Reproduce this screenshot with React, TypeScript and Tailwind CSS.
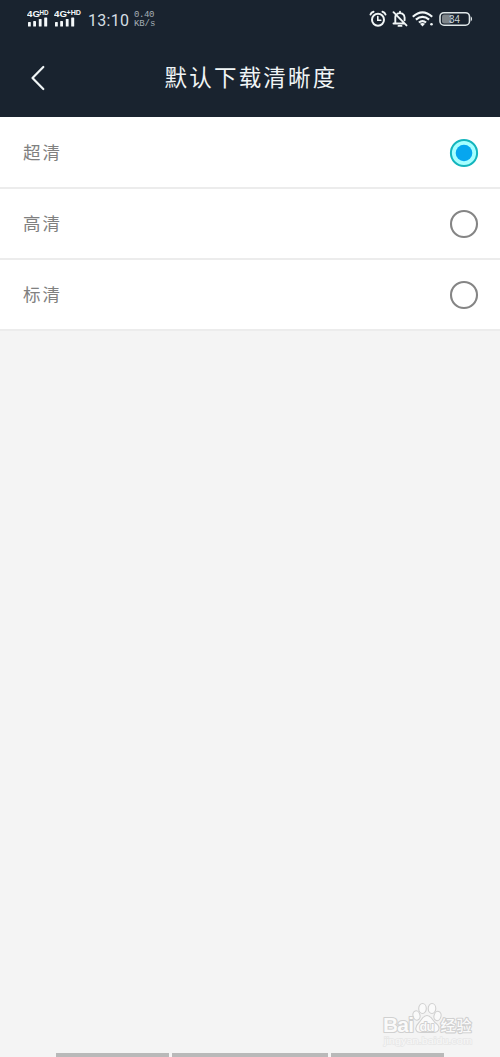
import { useState } from "react";

function SignalIcon({ label, wide }: { label: string; wide?: boolean }) {
  return (
    <svg width={wide ? 28 : 23} height="20" viewBox={wide ? "0 0 28 20" : "0 0 23 20"} fill="#f4f8fa">
      <text x="0" y="8" fontSize="9.5" fontWeight="700" fontFamily="Liberation Sans, sans-serif" textLength="13" lengthAdjust="spacingAndGlyphs">4G</text>
      <text x="12.5" y="6" fontSize="6.5" fontWeight="700" fontFamily="Liberation Sans, sans-serif" textLength={wide ? 14.5 : 9} lengthAdjust="spacingAndGlyphs">{label}</text>
      <rect x="1" y="13" width="2.8" height="4.5" rx=".6" />
      <rect x="6.2" y="12" width="2.8" height="5.5" rx=".6" />
      <rect x="11.8" y="10" width="2.8" height="7.5" rx=".6" />
      <rect x="17.2" y="8.5" width="3" height="9" rx=".6" />
    </svg>
  );
}

function AlarmIcon() {
  return (
    <svg width="18" height="18" viewBox="0 0 18 18" fill="none" stroke="#f1f6f7" strokeWidth="2" strokeLinecap="round">
      <circle cx="9" cy="9.8" r="6" />
      <path d="M1.5 4.5Q2.2 2.2 4.5 1.7M16.5 4.5Q15.8 2.2 13.5 1.7" />
      <path d="M8.8 6.5v3.8h3" strokeWidth="1.6" />
    </svg>
  );
}

function MutedBellIcon() {
  return (
    <svg width="16" height="18" viewBox="0 0 16 18" fill="none" stroke="#f1f6f7" strokeWidth="1.9" strokeLinecap="round" strokeLinejoin="round">
      <path d="M1.5 13.5h11M3.3 13V7.5q0-1.3.5-2.3M5.5 3.7Q8 2.5 10.3 3.7 12.6 4.9 12.6 7.5v2.8M8 1.7v1M6.5 15.9h3M1.5 2.2l13 13.2" />
    </svg>
  );
}

function WifiIcon() {
  return (
    <svg width="22" height="18" viewBox="0 0 22 18" fill="none" stroke="#f1f6f7" strokeWidth="2.2">
      <path d="M.8 6.700Q10.5-2 20.2 6.7M3.9 9.7q6.6-5.6 13.2 0M6.9 12.5q3.6-2.9 7.2 0" />
      <path d="m7.9 13.8 2.6 2.7 2.6-2.7q-2.6-1.8-5.2 0Z" fill="#f1f6f7" stroke="none" />
      <circle cx="19.5" cy="14.2" r="1.3" fill="#f1f6f7" stroke="none" />
    </svg>
  );
}

function BatteryIcon() {
  return (
    <svg width="34" height="16" viewBox="0 0 34 16" fill="none">
      <rect x="3" y="3.5" width="9.5" height="9" rx="2" fill="#7d8489" />
      <rect x="1" y="1.7" width="29.5" height="12.5" rx="4" stroke="#dfe7e9" strokeWidth="1.6" />
      <path d="M31.800 5.2q2.6 2.7 0 5.4Z" fill="#e9eff1" />
      <text x="10" y="11.8" fontSize="10.5" fontFamily="Liberation Sans, sans-serif" fill="#cdd5d8" textLength="11" lengthAdjust="spacingAndGlyphs">34</text>
    </svg>
  );
}

function StatusBar() {
  return (
    <div className="flex h-[40px] items-start pl-[27px] pr-[27px] pt-[9px]">
      <SignalIcon label="HD" />
      <div className="ml-[4px]"><SignalIcon label="+HD" wide /></div>
      <span className="ml-[6px] w-[42px] whitespace-nowrap font-['Roboto',sans-serif] text-[16px] leading-[23px] font-normal tracking-[0.3px] text-[#d5dee3]">13:10</span>
      <div className="ml-[4px] mt-[2px] whitespace-nowrap font-['Liberation_Mono',monospace] text-[9px] leading-[9px] tracking-[-0.4px] text-[#a5afb6]">
        <div>0.40</div>
        <div className="tracking-[-0.1px]">KB/s</div>
      </div>
      <div className="ml-auto mt-[1px] flex items-center">
        <AlarmIcon />
        <div className="ml-[5px]"><MutedBellIcon /></div>
        <div className="ml-[4px]"><WifiIcon /></div>
        <div className="ml-[5px]"><BatteryIcon /></div>
      </div>
    </div>
  );
}

function Radio({ checked }: { checked: boolean }) {
  return (
    <svg width="30" height="30" viewBox="0 0 30 30" fill="none">
      {checked ? (
        <>
          <circle cx="15" cy="15" r="13.1" fill="#a6ffff" stroke="#13b5bd" strokeWidth="2" />
          <circle cx="15" cy="15" r="8.3" fill="#06a6ef" />
        </>
      ) : (
        <circle cx="15" cy="15" r="13" stroke="#858585" strokeWidth="2.1" />
      )}
    </svg>
  );
}

function Watermark() {
  return (
    <svg className="absolute right-[24px] bottom-[8px]" width="94" height="48" viewBox="0 0 94 48" fill="#fafafa" stroke="#d0d0d0" strokeWidth="1.1">
      <ellipse cx="40.5" cy="7.5" rx="3.8" ry="5" />
      <ellipse cx="50" cy="7.5" rx="3.8" ry="5" />
      <ellipse cx="34.5" cy="14.5" rx="3.5" ry="4.7" transform="rotate(-15 34.5 14.5)" />
      <ellipse cx="55.5" cy="15" rx="3.5" ry="4.7" transform="rotate(15 55.5 15)" />
      <path d="M45 14.5c-4 0-5 4-8 7-5 5-4 10 2 10h12c7 0 8-6 2-10-3-3-4-7-8-7Z" />
      <g fontFamily="Liberation Sans, sans-serif" fontWeight="700" paintOrder="stroke" strokeWidth="2.2" strokeLinejoin="round">
        <text x="1" y="30.5" fontSize="21" textLength="31">Bai</text>
        <text x="37.5" y="29.5" fontSize="13" textLength="15" strokeWidth="1.8">du</text>
        <text x="58.5" y="29.5" fontSize="15" textLength="31" fontFamily="Noto Sans CJK SC, sans-serif" fontWeight="500">经验</text>
      </g>
      <text x="2" y="42.5" fontSize="9.5" textLength="88" lengthAdjust="spacingAndGlyphs" fill="#f8f8f8" stroke="#e7e7e7" strokeWidth="1.4" paintOrder="stroke" fontFamily="Liberation Sans, sans-serif">jingyan.baidu.com</text>
    </svg>
  );
}

const OPTIONS = ["超清", "高清", "标清"];

export default function App() {
  const [selected, setSelected] = useState(OPTIONS[0]);

  return (
    <main className="relative flex h-[1057px] w-[500px] flex-col overflow-hidden bg-[#f4f4f4]">
      <header className="h-[117px] shrink-0 bg-[#19232f]">
        <StatusBar />
        <div className="grid h-[75px] grid-cols-[100px_300px_100px] items-center">
          <button aria-label="返回" className="pl-[30px]">
            <svg width="16" height="26" viewBox="0 0 16 26" fill="none" stroke="#f0f5f6" strokeWidth="2.2" strokeLinecap="round" strokeLinejoin="round">
              <path d="M13.3 2 2.5 13l10.8 11" />
            </svg>
          </button>
          <h1 className="whitespace-nowrap pb-[3px] pl-[2px] text-center font-['KaiTi','Noto_Sans_CJK_SC',sans-serif] text-[22.5px] leading-[30px] font-normal tracking-[2.2px] text-[#f0f5f6]">默认下载清晰度</h1>
        </div>
      </header>
      <div role="radiogroup" className="bg-white">
        {OPTIONS.map((option) => (
          <button
            key={option}
            role="radio"
            aria-checked={selected === option}
            onClick={() => setSelected(option)}
            className="flex h-[71px] w-full items-center justify-between border-b-2 border-[#ececec] pl-[23px] pr-[21px] pt-px first:h-[72px] first:pt-[2px]"
          >
            <span className="pb-[2px] font-['KaiTi','Noto_Sans_CJK_SC',sans-serif] text-[17.5px] leading-[26px] font-normal tracking-[2px] text-[#808080]">{option}</span>
            <Radio checked={selected === option} />
          </button>
        ))}
      </div>
      <Watermark />
      <div className="mt-auto flex h-[4px] gap-[3px] pl-[56px]">
        <div className="w-[113px] bg-[#b9b9b9]" />
        <div className="w-[156px] bg-[#b9b9b9]" />
        <div className="w-[113px] bg-[#b9b9b9]" />
      </div>
    </main>
  );
}
